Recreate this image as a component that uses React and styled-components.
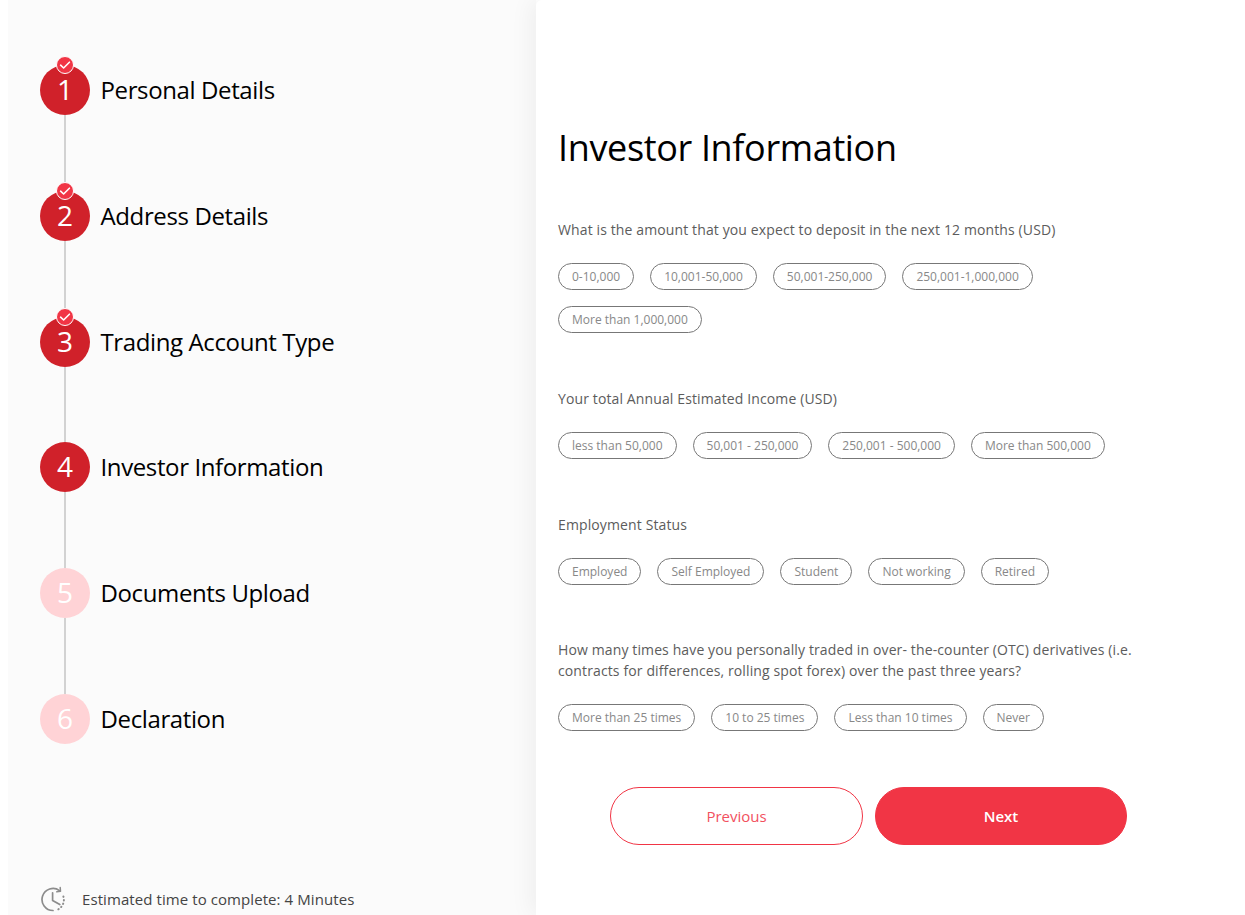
import React from "react";
import styled, { createGlobalStyle } from "styled-components";

const GlobalStyle = createGlobalStyle`
    html, body {
        margin: 0;
        height: 915px;
        overflow: hidden;
        background: #fff;
        font-family: "Open Sans", "Liberation Sans", sans-serif;
    }
    * {
        box-sizing: border-box;
    }
`;

const Page = styled.div`
    display: flex;
    height: 915px;
    padding-left: 8px;
`;

const Sidebar = styled.aside`
    display: flex;
    flex-direction: column;
    width: 528px;
    height: 100%;
    padding: 65px 0 0 32px;
    background: #fbfbfb;
`;

const Steps = styled.div`
    display: flex;
    flex-direction: column;
`;

const Step = styled.div`
    display: flex;
    height: ${(p) => (p.$last ? "50px" : "125.8px")};
`;

const Rail = styled.div`
    display: flex;
    flex-direction: column;
    align-items: center;
    width: 50px;
    margin-right: 10.5px;
`;

const Circle = styled.div`
    position: relative;
    display: flex;
    flex: none;
    align-items: center;
    justify-content: center;
    width: 50px;
    height: 50px;
    padding-bottom: 2px;
    border-radius: 50%;
    background: ${(p) => (p.$pending ? "#ffd3d6" : "#d0212a")};
    color: #fff;
    font-size: 28px;
`;

const Connector = styled.div`
    flex: 1;
    width: 2px;
    background: #d2d2d2;
`;

const Badge = styled.span`
    position: absolute;
    top: -9px;
    left: 16px;
    display: flex;
    align-items: center;
    justify-content: center;
    width: 18px;
    height: 18px;
    border-radius: 50%;
    border: 1px solid #fff;
    background: #f13545;
`;

const StepLabel = styled.div`
    height: 50px;
    line-height: 50px;
    font-size: 24px;
    letter-spacing: -0.38px;
    color: #000;
`;

const Estimate = styled.div`
    display: flex;
    align-items: center;
    gap: 15px;
    margin-top: 142px;
    font-size: 15px;
    letter-spacing: 0.08px;
    color: #444;
`;

const Main = styled.main`
    position: relative;
    width: 709px;
    height: 100%;
    padding: 123px 0 0 22px;
    border-top-left-radius: 6px;
    background: #fff;
    box-shadow: -6px 0 22px rgba(0, 0, 0, 0.05);
`;

const Title = styled.h1`
    margin: 0 0 46px;
    height: 50px;
    line-height: 50px;
    font-size: 36px;
    font-weight: 400;
    letter-spacing: -0.35px;
    color: #000;
`;

const Question = styled.section`
    width: 590px;
    margin-bottom: ${(p) => p.$gap}px;
`;

const QuestionText = styled.p`
    margin: 0 0 23px;
    font-size: 14px;
    line-height: 21px;
    letter-spacing: 0.12px;
    color: #5c5c5c;
`;

const Pills = styled.div`
    display: flex;
    flex-wrap: wrap;
    gap: 16px;
`;

const Pill = styled.button`
    height: 27px;
    padding: 0 13px;
    border: 1px solid #777;
    border-radius: 14px;
    background: #fff;
    font-family: inherit;
    font-size: 12px;
    color: #888;
`;

const Actions = styled.div`
    display: flex;
    gap: 12px;
    margin: 56px 0 0 52px;
`;

const ActionButton = styled.button`
    width: ${(p) => (p.$primary ? 252 : 253)}px;
    height: 58px;
    border: 1px solid #f13545;
    border-radius: 29px;
    background: ${(p) => (p.$primary ? "#f13545" : "#fff")};
    color: ${(p) => (p.$primary ? "#fff" : "#f2505e")};
    font-family: "Open Sans", sans-serif;
    font-size: 15px;
    font-weight: ${(p) => (p.$primary ? 600 : 400)};
`;

const Check = () => (
    <svg width="12" height="12" viewBox="0 0 12 12" fill="none">
        <path d="M1.6 6.2l3 2.8L10.4 3.2" stroke="#fff" strokeWidth="1.6" strokeLinecap="round" strokeLinejoin="round" />
    </svg>
);

const ClockIcon = () => (
    <svg width="27" height="27" viewBox="0 0 27 27" fill="none" stroke="#8c8c8c" strokeWidth="1.7" strokeLinecap="round" strokeLinejoin="round">
        <path d="M19.5 4.6A11 11 0 1 0 13 24.5" />
        <path d="M20.2 1.6l.3 3.6-3.7.6" strokeWidth="1.5" />
        <path d="M23.4 10.5a11 11 0 0 1-5.4 13" strokeWidth="2" strokeDasharray="0.4 3.2" />
        <path d="M12.6 6.8v7.6l7.2 4.2" />
    </svg>
);

const steps = [
    { label: "Personal Details", done: true },
    { label: "Address Details", done: true },
    { label: "Trading Account Type", done: true },
    { label: "Investor Information" },
    { label: "Documents Upload", pending: true },
    { label: "Declaration", pending: true },
];

const questions = [
    {
        text: "What is the amount that you expect to deposit in the next 12 months (USD)",
        options: ["0-10,000", "10,001-50,000", "50,001-250,000", "250,001-1,000,000", "More than 1,000,000"],
        gap: 55,
    },
    {
        text: "Your total Annual Estimated Income (USD)",
        options: ["less than 50,000", "50,001 - 250,000", "250,001 - 500,000", "More than 500,000"],
        gap: 55,
    },
    {
        text: "Employment Status",
        options: ["Employed", "Self Employed", "Student", "Not working", "Retired"],
        gap: 54,
    },
    {
        text: "How many times have you personally traded in over- the-counter (OTC) derivatives (i.e. contracts for differences, rolling spot forex) over the past three years?",
        options: ["More than 25 times", "10 to 25 times", "Less than 10 times", "Never"],
        gap: 0,
    },
];

const App = () => (
    <>
        <GlobalStyle />
        <Page>
            <Sidebar>
                <Steps>
                    {steps.map((step, i) => {
                        const last = i === steps.length - 1;
                        return (
                            <Step key={step.label} $last={last}>
                                <Rail>
                                    <Circle $pending={step.pending}>
                                        {i + 1}
                                        {step.done && <Badge><Check /></Badge>}
                                    </Circle>
                                    {!last && <Connector />}
                                </Rail>
                                <StepLabel>{step.label}</StepLabel>
                            </Step>
                        );
                    })}
                </Steps>
                <Estimate>
                    <ClockIcon />
                    Estimated time to complete: 4 Minutes
                </Estimate>
            </Sidebar>
            <Main>
                <Title>Investor Information</Title>
                {questions.map((q) => (
                    <Question key={q.text} $gap={q.gap}>
                        <QuestionText>{q.text}</QuestionText>
                        <Pills>
                            {q.options.map((o) => (
                                <Pill key={o}>{o}</Pill>
                            ))}
                        </Pills>
                    </Question>
                ))}
                <Actions>
                    <ActionButton>Previous</ActionButton>
                    <ActionButton $primary>Next</ActionButton>
                </Actions>
            </Main>
        </Page>
    </>
);

export default App;
